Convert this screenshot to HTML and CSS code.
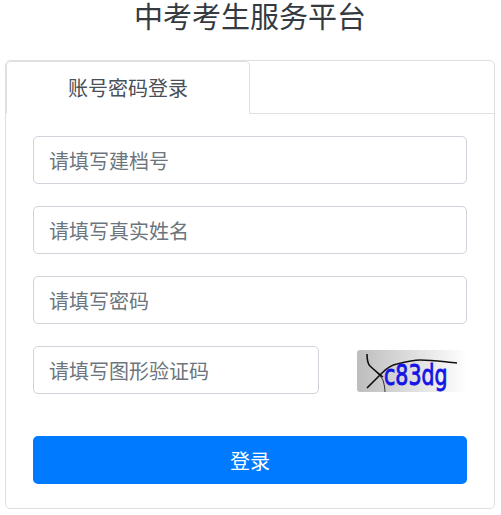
FILE: index.html
```html
<!DOCTYPE html>
<html lang="zh-CN">
<head>
  <meta charset="UTF-8">
  <meta name="viewport" content="width=device-width, initial-scale=1.0">
  <title>中考考生服务平台</title>
  <link rel="stylesheet" href="styles.css">
</head>
<body>
  <h1 class="title">中考考生服务平台</h1>

  <div class="card">
    <div class="tabs">
      <div class="tab active">账号密码登录</div>
    </div>

    <form class="login-form">
      <input class="field" type="text" placeholder="请填写建档号">
      <input class="field" type="text" placeholder="请填写真实姓名">
      <input class="field" type="password" placeholder="请填写密码">

      <div class="captcha-row">
        <input class="field" type="text" placeholder="请填写图形验证码">
        <svg class="captcha" width="110" height="42" viewBox="0 0 110 42" aria-label="验证码">
          <defs>
            <linearGradient id="captchaBg" x1="0" y1="0" x2="1" y2="0">
              <stop offset="0" stop-color="#bdbdbd"/>
              <stop offset="0.5" stop-color="#dedede"/>
              <stop offset="1" stop-color="#ffffff"/>
            </linearGradient>
          </defs>
          <rect width="110" height="42" rx="3" fill="url(#captchaBg)"/>
          <path d="M13 16 C18 21 23 25 26 30 C27 34 28 38 28 42" fill="none" stroke="#333" stroke-width="1"/>
          <path d="M10 4 C10 10 11 14 13 16 C17 20 21 23 26 27" fill="none" stroke="#111" stroke-width="1.6"/>
          <path d="M10 38 L25 23 C30 18 34 15 40 14 C48 12 56 10 63 10 C76 10 88 12 100 13" fill="none" stroke="#111" stroke-width="1.6"/>
          <text class="captcha-text" transform="translate(27 35) scale(0.71 1)">c83dg</text>
        </svg>
      </div>

      <button class="submit" type="button">登录</button>
    </form>
  </div>
</body>
</html>
```

FILE: styles.css
```css
body {
  margin: 0;
  padding: 0 6px 6px 5px;
  font-family: "Noto Sans CJK SC", "Liberation Sans", sans-serif;
  color: #343a40;
  background-color: #fff;
}

.title {
  margin: 0 0 25px;
  height: 35px;
  line-height: 36px;
  font-family: "Liberation Sans", "Noto Sans CJK SC", sans-serif;
  font-size: 29px;
  font-weight: 400;
  text-align: center;
  color: #343a40;
}

.card {
  border: 1px solid #dfdfdf;
  border-radius: 5px;
  height: 449px;
  box-sizing: border-box;
}

.tabs {
  display: flex;
  height: 52px;
  border-bottom: 1px solid #dee2e6;
}

.tab {
  width: 244px;
  box-sizing: border-box;
  height: 53px;
  line-height: 52px;
  font-size: 20px;
  text-align: center;
  color: #495057;
  background-color: #fff;
  border: 1px solid #dee2e6;
  border-bottom-color: #fff;
  border-radius: 5px 5px 0 0;
}

.login-form {
  display: flex;
  flex-direction: column;
  gap: 22px;
  padding: 22px 27px 0;
}

.field {
  display: block;
  width: 100%;
  height: 48px;
  box-sizing: border-box;
  padding: 0 15px;
  border: 1px solid #ced4da;
  border-radius: 5px;
  font-family: inherit;
  font-size: 20px;
  color: #495057;
  background-color: #fff;
  outline: none;
}

.field::placeholder {
  color: #6c757d;
  opacity: 1;
}

.captcha-row {
  display: flex;
  justify-content: space-between;
  align-items: center;
}

.captcha-row .field {
  width: 286px;
}

.captcha {
  display: block;
  margin-top: 1px;
}

.captcha-text {
  font-family: "DejaVu Sans", sans-serif;
  font-size: 29px;
  font-weight: 400;
  fill: #1414e6;
  stroke: #1414e6;
  stroke-width: 0.9;
}

.submit {
  display: block;
  width: 100%;
  height: 48px;
  margin-top: 20px;
  border: none;
  border-radius: 5px;
  font-family: inherit;
  font-size: 20px;
  color: #fff;
  background-color: #007bff;
  cursor: pointer;
}
```
